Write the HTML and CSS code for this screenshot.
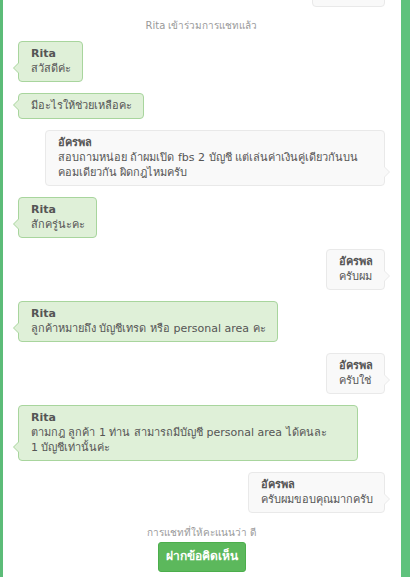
FILE: index.html
```html
<!DOCTYPE html>
<html lang="th">
<head>
    <meta charset="UTF-8">
    <title>แชท</title>
    <link rel="stylesheet" href="styles.css">
</head>
<body>
    <div class="chat">
        <!-- previous message, scrolled out of view -->
        <div class="msg user msg-cut"></div>

        <div class="system system-join">Rita เข้าร่วมการแชทแล้ว</div>

        <div class="msg agent">
            <div class="name">Rita</div>
            <div class="text">สวัสดีค่ะ</div>
        </div>
        <div class="msg agent">
            <div class="text">มีอะไรให้ช่วยเหลือคะ</div>
        </div>
        <div class="msg user">
            <div class="name">อัครพล</div>
            <div class="text">สอบถามหน่อย ถ้าผมเปิด fbs 2 บัญชี แต่เล่นค่าเงินคู่เดียวกันบนคอมเดียวกัน ผิดกฎไหมครับ</div>
        </div>
        <div class="msg agent">
            <div class="name">Rita</div>
            <div class="text">สักครู่นะคะ</div>
        </div>
        <div class="msg user">
            <div class="name">อัครพล</div>
            <div class="text">ครับผม</div>
        </div>
        <div class="msg agent">
            <div class="name">Rita</div>
            <div class="text">ลูกค้าหมายถึง บัญชีเทรด หรือ personal area คะ</div>
        </div>
        <div class="msg user">
            <div class="name">อัครพล</div>
            <div class="text">ครับใช่</div>
        </div>
        <div class="msg agent">
            <div class="name">Rita</div>
            <div class="text">ตามกฎ ลูกค้า 1 ท่าน สามารถมีบัญชี personal area ได้คนละ 1&nbsp;บัญชีเท่านั้นค่ะ</div>
        </div>
        <div class="msg user">
            <div class="name">อัครพล</div>
            <div class="text">ครับผมขอบคุณมากครับ</div>
        </div>

        <div class="rating">
            <div class="system">การแชทที่ให้คะแนนว่า ดี</div>
            <a href="#" class="feedback-btn">ฝากข้อคิดเห็น</a>
        </div>
    </div>
</body>
</html>
```

FILE: styles.css
```css
/* chat window */
html, body {
    margin: 0;
    height: 577px;
    overflow: hidden;
    background: #fff;
}

body {
    font-family: Tahoma, "DejaVu Sans", sans-serif;
    font-size: 11px;
    line-height: 15px;
    color: #555;
}

.chat {
    height: 577px;
    box-sizing: border-box;
    border-left: 3px solid #5cbc78;
    border-right: 9px solid #5fc27d;
    padding: 0 16px 0 15px;
    display: flex;
    flex-direction: column;
    align-items: flex-start;
    gap: 11px;
}

.system {
    align-self: center;
    font-size: 10px;
    color: #999;
}

.system-join {
    margin-bottom: -3px;
}

/* bubbles */
.msg {
    position: relative;
    max-width: 315px;
    padding: 4px 11px 5px 12px;
    border: 1px solid;
    border-radius: 4px;
}

.msg .name {
    font-weight: bold;
    font-size: 11px;
}

.agent {
    background: #dff0d8;
    border-color: #a8d59d;
}

.user {
    align-self: flex-end;
    background: #f9f9f9;
    border-color: #e9e9e9;
}

.msg-cut {
    width: 48px;
    height: 30px;
    margin-top: -34px;
}

/* little tails */
.msg::before,
.msg::after {
    content: "";
    position: absolute;
    bottom: 7px;
    border: 6px solid transparent;
}

.agent::before {
    left: -12px;
    border-right-color: #a8d59d;
}

.agent::after {
    left: -11px;
    border-right-color: #dff0d8;
}

.user::before {
    right: -12px;
    border-left-color: #e9e9e9;
}

.user::after {
    right: -11px;
    border-left-color: #f9f9f9;
}

/* rating + feedback */
.rating {
    align-self: center;
    display: flex;
    flex-direction: column;
    align-items: center;
    gap: 2px;
    margin-top: 1px;
}

.feedback-btn {
    display: inline-block;
    padding: 6px 7px 7px;
    background: #5cb85c;
    border: 1px solid #4cae4c;
    border-radius: 3px;
    color: #fff;
    font-weight: bold;
    font-size: 12px;
    text-decoration: none;
}
```
